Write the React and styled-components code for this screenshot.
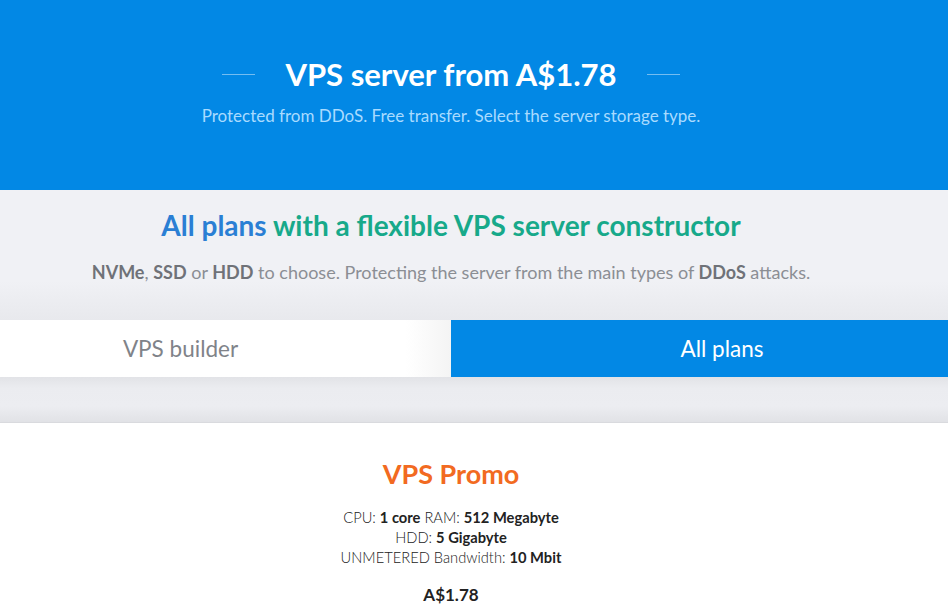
import styled, { createGlobalStyle } from 'styled-components';

const GlobalStyle = createGlobalStyle`
  body {
    margin: 0;
    font-family: Lato, "Open Sans", sans-serif;
    background: #fff;
  }
`;

// content column is 902px wide, so everything centres at x=451
const Inner = styled.div`
  width: 902px;
  text-align: center;
`;

const Hero = styled.header`
  height: 190px;
  box-sizing: border-box;
  padding-top: 53px;
  background: #0288e5;
`;

const TitleRow = styled.div`
  display: flex;
  justify-content: center;
  align-items: center;
  gap: 30px;
`;

const Dash = styled.span`
  width: 33px;
  height: 1px;
  background: rgba(255, 255, 255, 0.45);
`;

const Title = styled.h1`
  margin: 0;
  font-size: 31px;
  line-height: 42px;
  font-weight: 700;
  color: #fff;
`;

const Subtitle = styled.p`
  margin: 10px 0 0;
  font-size: 17px;
  line-height: 22px;
  color: #a9dbff;
`;

const Intro = styled.section`
  height: 130px;
  box-sizing: border-box;
  padding-top: 17px;
  background: linear-gradient(to bottom, #f0f1f5 0%, #f0f1f5 70%, #e8e9ed 100%);
`;

const Heading = styled.h2`
  margin: 0;
  font-size: 28px;
  line-height: 36px;
  font-weight: 700;
  color: #17a98a;
`;

const Accent = styled.span`
  color: #2a7fd4;
`;

const Lead = styled.p`
  margin: 17px 0 0;
  font-size: 18px;
  line-height: 24px;
  color: #8b8e94;

  b {
    color: #6f7278;
    font-weight: 700;
  }
`;

const Tabs = styled.nav`
  display: flex;
  height: 57px;
`;

const Tab = styled.div`
  display: flex;
  align-items: center;
  justify-content: center;
  box-sizing: border-box;
  font-size: 22.5px;
  flex: ${p => (p.$active ? '1' : '0 0 451px')};
  padding: ${p => (p.$active ? '0 0 0 45px' : '0 90px 0 0')};
  color: ${p => (p.$active ? '#fff' : '#808389')};
  background: ${p =>
    p.$active ? '#0288e5' : 'linear-gradient(to right, #fff 0%, #fff 90%, #f4f4f4 100%)'};
`;

const Gap = styled.div`
  height: 45px;
  border-bottom: 1px solid #d9dade;
  background: linear-gradient(to bottom, #e2e3e7 0%, #ebecf0 25%, #ecedf1 65%, #e1e2e6 100%);
`;

const Plan = styled.section`
  padding-top: 34px;
`;

const PlanName = styled.h3`
  margin: 0;
  font-size: 27px;
  line-height: 34px;
  font-weight: 700;
  color: #f26a21;
`;

const Specs = styled.div`
  margin-top: 16px;
  font-size: 14.7px;
  line-height: 20px;
  font-weight: 300;
  color: #222;

  b {
    font-weight: 700;
  }
`;

const Price = styled.div`
  margin-top: 17px;
  font-size: 17px;
  font-weight: 700;
  color: #222;
`;

export default function App() {
  return (
    <>
      <GlobalStyle />
      <Hero>
        <Inner>
          <TitleRow>
            <Dash />
            <Title>VPS server from A$1.78</Title>
            <Dash />
          </TitleRow>
          <Subtitle>Protected from DDoS. Free transfer. Select the server storage type.</Subtitle>
        </Inner>
      </Hero>
      <Intro>
        <Inner>
          <Heading>
            <Accent>All plans</Accent> with a flexible VPS server constructor
          </Heading>
          <Lead>
            <b>NVMe</b>, <b>SSD</b> or <b>HDD</b> to choose. Protecting the server from the main
            types of <b>DDoS</b> attacks.
          </Lead>
        </Inner>
      </Intro>
      <Tabs>
        <Tab>VPS builder</Tab>
        <Tab $active>All plans</Tab>
      </Tabs>
      <Gap />
      <Plan>
        <Inner>
          <PlanName>VPS Promo</PlanName>
          <Specs>
            <div>
              CPU: <b>1 core</b> RAM: <b>512 Megabyte</b>
            </div>
            <div>
              HDD: <b>5 Gigabyte</b>
            </div>
            <div>
              UNMETERED Bandwidth: <b>10 Mbit</b>
            </div>
          </Specs>
          <Price>A$1.78</Price>
        </Inner>
      </Plan>
    </>
  );
}
